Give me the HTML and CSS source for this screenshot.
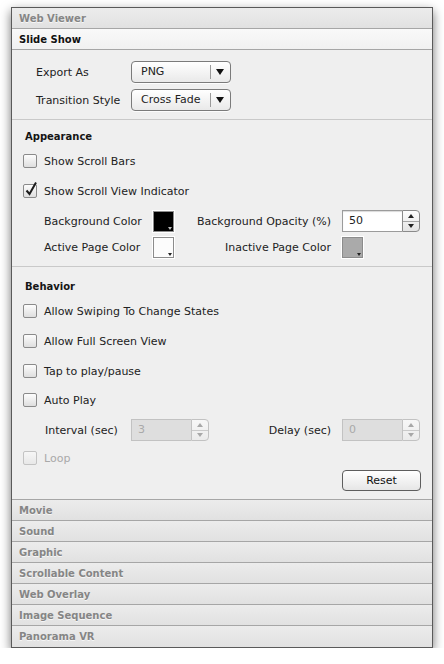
FILE: index.html
```html
<!DOCTYPE html>
<html>

<head>
  <meta charset="utf-8">
  <title>Slide Show Inspector</title>
  <link rel="stylesheet" href="styles.css">
</head>

<body>

  <div class="panel">
    <div class="tab">Web Viewer</div>
    <div class="tab open">Slide Show</div>

    <div class="section export">
      <div class="field">
        <span class="label">Export As</span>
        <div class="select"><span class="value">PNG</span><span class="arrow"></span></div>
      </div>
      <div class="field">
        <span class="label">Transition Style</span>
        <div class="select"><span class="value">Cross Fade</span><span class="arrow"></span></div>
      </div>
    </div>

    <div class="section appearance">
      <div class="title">Appearance</div>
      <div class="check"><span class="box"></span>Show Scroll Bars</div>
      <div class="check"><span class="box">
          <svg class="tick" width="14" height="16" viewBox="0 0 14 16">
            <path d="M2.5 9.5 L5.5 13 L12 1.5" fill="none" stroke="#1b1b1b" stroke-width="2" />
          </svg>
        </span>Show Scroll View Indicator</div>

      <div class="colors first">
        <span class="clabel">Background Color</span>
        <span class="well black"></span>
        <span class="rlabel">Background Opacity (%)</span>
        <div class="number">
          <span class="input">50</span>
          <span class="stepper"><span class="up"></span><span class="down"></span></span>
        </div>
      </div>
      <div class="colors second">
        <span class="clabel">Active Page Color</span>
        <span class="well white"></span>
        <span class="rlabel">Inactive Page Color</span>
        <span class="well gray"></span>
      </div>
    </div>

    <div class="section behavior">
      <div class="title">Behavior</div>
      <div class="check"><span class="box"></span>Allow Swiping To Change States</div>
      <div class="check"><span class="box"></span>Allow Full Screen View</div>
      <div class="check"><span class="box"></span>Tap to play/pause</div>
      <div class="check autoplay"><span class="box"></span>Auto Play</div>

      <div class="timing">
        <span class="tlabel">Interval (sec)</span>
        <div class="number disabled">
          <span class="input">3</span>
          <span class="stepper"><span class="up"></span><span class="down"></span></span>
        </div>
        <span class="rlabel">Delay (sec)</span>
        <div class="number disabled">
          <span class="input">0</span>
          <span class="stepper"><span class="up"></span><span class="down"></span></span>
        </div>
      </div>

      <div class="check loop disabled"><span class="box"></span>Loop</div>

      <div class="actions">
        <button class="reset">Reset</button>
      </div>
    </div>

    <div class="tab lower">Movie</div>
    <div class="tab lower">Sound</div>
    <div class="tab lower">Graphic</div>
    <div class="tab lower">Scrollable Content</div>
    <div class="tab lower">Web Overlay</div>
    <div class="tab lower">Image Sequence</div>
    <div class="tab lower last">Panorama VR</div>
  </div>

</body>

</html>
```

FILE: styles.css
```css
body {
  margin: 0;
  background: #ffffff;
  font: 11px "DejaVu Sans", Verdana, sans-serif;
  color: #222;
}

.panel {
  margin: 7px 0 0 11px;
  width: 420px;
  border: 1px solid #5a5a5a;
  background: #efefef;
  box-shadow: 0 4px 10px rgba(0, 0, 0, 0.55);
}

/* Collapsed / expanded section headers */
.tab {
  height: 20px;
  padding-left: 7px;
  display: flex;
  align-items: center;
  font-size: 10px;
  font-weight: bold;
  color: #858585;
  text-shadow: 0 1px 0 rgba(255, 255, 255, 0.7);
  background: linear-gradient(#ececec, #e1e1e1);
  border-bottom: 1px solid #a6a6a6;
}

.tab.open {
  color: #111;
  background: linear-gradient(#f9f9f9, #f1f1f1);
}

.tab.lower {
  border-bottom: none;
  border-top: 1px solid #a6a6a6;
}

.tab.last {
  height: 21px;
}

.section {
  padding-left: 11px;
}

.section + .section {
  border-top: 1px solid #c9c9c9;
}

.export {
  padding-top: 11px;
  padding-bottom: 8px;
}

.appearance {
  padding-top: 6px;
  padding-bottom: 8px;
}

.behavior {
  padding-top: 9px;
  padding-bottom: 8px;
}

.field {
  height: 22px;
  display: flex;
  align-items: center;
}

.field + .field {
  margin-top: 6px;
}

.label {
  width: 95px;
  padding-left: 13px;
}

.select {
  width: 98px;
  height: 20px;
  border: 1px solid #7b7b7b;
  border-radius: 4px;
  background: linear-gradient(#ffffff, #e9e9e9);
  display: flex;
  align-items: center;
  box-shadow: 0 1px 0 rgba(255, 255, 255, 0.8);
}

.select .value {
  flex: 1;
  padding-left: 9px;
  border-right: 1px solid #9a9a9a;
  height: 14px;
  line-height: 14px;
}

.select .arrow {
  width: 0;
  height: 0;
  margin: 0 6px 0 5px;
  border-left: 4px solid transparent;
  border-right: 4px solid transparent;
  border-top: 6px solid #111;
}

.title {
  height: 20px;
  display: flex;
  align-items: center;
  padding-left: 2px;
  font-size: 10px;
  font-weight: bold;
  color: #151515;
}

.check {
  height: 30px;
  display: flex;
  align-items: center;
}

.check.autoplay {
  height: 28px;
}

.check.loop {
  height: 24px;
}

.box {
  position: relative;
  width: 12px;
  height: 12px;
  margin-right: 7px;
  border: 1px solid #8a8a8a;
  border-radius: 2px;
  background: linear-gradient(#fdfdfd, #dedede);
}

.tick {
  position: absolute;
  left: 0;
  top: -4px;
}

.disabled {
  color: #a9a9a9;
}

.check.disabled .box {
  border-color: #c3c3c3;
  background: linear-gradient(#f6f6f6, #e8e8e8);
}

.colors {
  display: grid;
  grid-template-columns: 130px 21px 168px auto;
  align-items: center;
}

.colors.first {
  height: 30px;
}

.colors.second {
  height: 22px;
}

.clabel {
  padding-left: 21px;
}

.rlabel {
  text-align: right;
  padding-right: 11px;
}

.well {
  position: relative;
  width: 19px;
  height: 19px;
  border: 1px solid #8c8c8c;
  box-shadow: 0 0 0 1px #ffffff;
}

.well::after {
  content: "";
  position: absolute;
  right: 1px;
  bottom: 1px;
  border-left: 2px solid transparent;
  border-right: 2px solid transparent;
  border-top: 3px solid #222;
}

.well.black {
  background: #000;
}

.well.black::after {
  border-top-color: #bbb;
}

.well.white {
  background: #fcfcfc;
}

.well.gray {
  background: #aaaaaa;
}

.number {
  display: flex;
  height: 22px;
}

.number .input {
  width: 53px;
  height: 20px;
  padding-left: 6px;
  line-height: 20px;
  border: 1px solid #9b9b9b;
  border-right: none;
  background: #ffffff;
  box-shadow: inset 0 1px 1px rgba(0, 0, 0, 0.15);
}

.stepper {
  width: 16px;
  height: 20px;
  border: 1px solid #8a8a8a;
  border-radius: 0 4px 4px 0;
  background: linear-gradient(#fdfdfd, #e4e4e4);
  display: flex;
  flex-direction: column;
}

.stepper span {
  flex: 1;
  display: flex;
  align-items: center;
  justify-content: center;
}

.stepper .up {
  border-bottom: 1px solid #a5a5a5;
}

.stepper .up::before,
.stepper .down::before {
  content: "";
  border-left: 3px solid transparent;
  border-right: 3px solid transparent;
}

.stepper .up::before {
  border-bottom: 4px solid #222;
}

.stepper .down::before {
  border-top: 4px solid #222;
}

.number.disabled .input {
  color: #a9a9a9;
  background: #dedede;
  border-color: #c2c2c2;
  box-shadow: none;
}

.number.disabled .stepper {
  border-color: #c2c2c2;
  background: linear-gradient(#f7f7f7, #ebebeb);
}

.number.disabled .stepper .up {
  border-bottom-color: #cacaca;
}

.number.disabled .stepper .up::before {
  border-bottom-color: #a8a8a8;
}

.number.disabled .stepper .down::before {
  border-top-color: #a8a8a8;
}

.timing {
  height: 32px;
  display: flex;
  align-items: center;
}

.tlabel {
  width: 86px;
  padding-left: 22px;
}

.timing .rlabel {
  width: 122px;
}

.actions {
  height: 21px;
  display: flex;
  justify-content: flex-end;
  padding-right: 11px;
}

.reset {
  width: 79px;
  height: 21px;
  border: 1px solid #5e5e5e;
  border-radius: 4px;
  background: linear-gradient(#ffffff, #e6e6e6);
  font: 11px "DejaVu Sans", Verdana, sans-serif;
  color: #111;
  padding: 0;
}
```
